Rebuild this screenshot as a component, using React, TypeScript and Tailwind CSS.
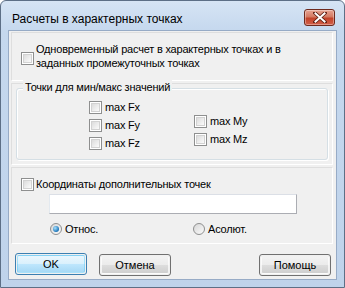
import React from 'react';

const font = { fontFamily: '"Liberation Sans", Arial, sans-serif' };

function CheckBox() {
  return (
    <span className="inline-block w-[13px] h-[13px] shrink-0 border border-[#8e8f8f] bg-white p-[1px]">
      <span className="block w-full h-full border border-[#d2d2d2] bg-gradient-to-br from-[#dcdcdc] to-[#fbfbfb]" />
    </span>
  );
}

function Radio({ checked }: { checked?: boolean }) {
  return (
    <span className="inline-flex items-center justify-center w-[12px] h-[12px] shrink-0 rounded-full border border-[#8e8f8f] bg-gradient-to-br from-[#d7d7d7] to-[#fbfbfb]">
      {checked && (
        <span className="block w-[6px] h-[6px] rounded-full bg-[radial-gradient(circle_at_35%_35%,#a9e2ff,#1b74b8_70%,#0b4d86)]" />
      )}
    </span>
  );
}

function Check({ label }: { label: string }) {
  return (
    <div className="flex items-center h-[18px]">
      <CheckBox />
      <span className="ml-[3px] text-[11px] tracking-[-0.2px] text-black">{label}</span>
    </div>
  );
}

function Button({ label, primary }: { label: string; primary?: boolean }) {
  return (
    <button
      className={`w-[72px] h-[22px] rounded-[3px] border text-[11px] font-normal text-black p-[1px] ${
        primary ? 'border-[#3c7fb1]' : 'border-[#707070]'
      }`}
      style={font}
    >
      <span
        className={`flex items-center justify-center w-full h-full rounded-[2px] ${
          primary
            ? 'bg-[linear-gradient(#eaf6fd_0%,#d9f0fc_50%,#bee6fd_51%,#a7d9f5_100%)] border border-[#48c2f4]/40'
            : 'bg-[linear-gradient(#f2f2f2_0%,#ebebeb_50%,#dddddd_51%,#cfcfcf_100%)] border border-white/70'
        }`}
      >
        {label}
      </span>
    </button>
  );
}

function CloseButton() {
  return (
    <div className="w-[31px] h-[17px] rounded-[3px] border border-[#6e2a1e] bg-[linear-gradient(#e8a493_0%,#d47a63_45%,#c2432a_55%,#d2604a_100%)] flex items-center justify-center shadow-[inset_0_0_0_1px_rgba(255,255,255,0.35)]">
      <svg width="14" height="11" viewBox="0 0 14 11">
        <path d="M2 1 L12 10 M12 1 L2 10" stroke="#5a1d12" strokeWidth="3.6" strokeLinecap="square" />
        <path d="M2.5 1.5 L11.5 9.5 M11.5 1.5 L2.5 9.5" stroke="#ffffff" strokeWidth="2" strokeLinecap="square" />
      </svg>
    </div>
  );
}

export default function App() {
  return (
    <div className="w-[345px] h-[288px] bg-white" style={font}>
      <div className="w-full h-full flex flex-col border border-[#5d6f86] rounded-t-[6px] bg-[linear-gradient(#d6e4f4_0px,#c5d8ee_30px,#bfd3eb_100%)]">
        <div className="h-[29px] flex items-start justify-between pl-[11px] pr-[9px]">
          <span className="text-[12px] leading-[14px] text-black mt-[11px]">Расчеты в характерных точках</span>
          <div className="mt-[8px]">
            <CloseButton />
          </div>
        </div>

        <div className="flex-1 mx-[7px] mb-[7px] border border-[#97abc6] bg-[#f0f0f0] flex flex-col px-[1px] pt-[1px]">
          {/* top option */}
          <div className="mx-[1px] mr-[2px] h-[49px] border border-[#dedede] border-b-white border-r-white flex items-start pl-[9px] pt-[9px]">
            <div className="mt-[6px]">
              <CheckBox />
            </div>
            <div className="ml-[2px] text-[11px] tracking-[-0.2px] leading-[14px] text-black">
              Одновременный расчет в характерных точках и в
              <br />
              заданных промежуточных точках
            </div>
          </div>

          {/* min / max points */}
          <div className="mt-[2px] mx-[1px] mr-[2px] h-[82px] border border-[#dedede] border-b-white border-r-white px-[4px] pt-[4px]">
            <div className="relative h-[72px] border border-[#d5dfe5] rounded-[3px] shadow-[inset_1px_1px_0_#fff,1px_1px_0_#fff]">
              <span className="absolute left-[6px] -top-[9px] px-[2px] bg-[#f0f0f0] text-[11px] tracking-[-0.2px] leading-[14px] text-black">
                Точки для мин/макс значений
              </span>
              <div className="flex pl-[72px] pt-[9px]">
                <div className="flex flex-col w-[105px]">
                  <Check label="max Fx" />
                  <Check label="max Fy" />
                  <Check label="max Fz" />
                </div>
                <div className="flex flex-col pt-[14px]">
                  <Check label="max My" />
                  <Check label="max Mz" />
                </div>
              </div>
            </div>
          </div>

          {/* extra coordinates */}
          <div className="mt-[2px] mx-[1px] mr-[2px] h-[77px] border border-[#dedede] border-b-white border-r-white flex flex-col pl-[9px] pt-[9px]">
            <div className="flex items-center h-[14px]">
              <CheckBox />
              <span className="ml-[2px] text-[11px] tracking-[-0.2px] text-black">Координаты дополнительных точек</span>
            </div>
            <div className="ml-[28px] mt-[3px] w-[248px] h-[20px] bg-white border border-[#abadb3] border-t-[#dbdfe6] border-l-[#e3e9ef]" />
            <div className="flex items-center h-[16px] mt-[7px] ml-[29px]">
              <div className="flex items-center w-[143px]">
                <Radio checked />
                <span className="ml-[3px] text-[11px] tracking-[-0.2px] text-black">Относ.</span>
              </div>
              <div className="flex items-center">
                <Radio />
                <span className="ml-[3px] text-[11px] tracking-[-0.2px] text-black">Асолют.</span>
              </div>
            </div>
          </div>

          {/* buttons */}
          <div className="flex items-center mt-[8px] pl-[5px]">
            <Button label="OK" primary />
            <div className="ml-[12px]">
              <Button label="Отмена" />
            </div>
            <div className="ml-auto mr-[4px]">
              <Button label="Помощь" />
            </div>
          </div>
        </div>
      </div>
    </div>
  );
}
